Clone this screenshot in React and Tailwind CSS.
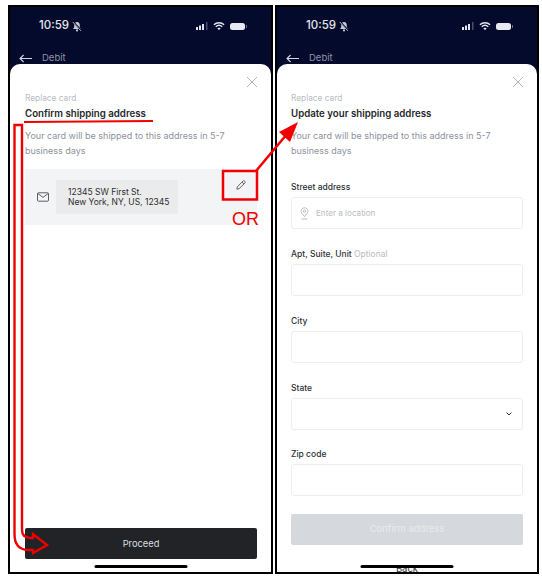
import React from "react";

const font = { fontFamily: "Inter, 'Liberation Sans', sans-serif" };

function StatusBar() {
  return (
    <div className="flex items-center justify-between h-[26px] pl-[29px] pr-[24px] shrink-0">
      <div className="flex items-center gap-[3px] text-[11.5px] font-medium text-[#e4e6ee]">
        <span>10:59</span>
        <svg width="10" height="11" viewBox="0 0 10 11" fill="#c9cbd6">
          <path d="M5 1 C3.2 1 2.2 2.4 2.2 4.2 V6.2 L1 8 H9 L7.8 6.2 V4.2 C7.8 2.4 6.8 1 5 1Z" />
          <circle cx="5" cy="9.4" r="1.1" />
          <path d="M1.4 1 L9.4 9.6" stroke="#040a2c" strokeWidth="1.6" />
          <path d="M0.8 1 L8.8 9.8" stroke="#c9cbd6" strokeWidth="0.9" />
        </svg>
      </div>
      <div className="flex items-center gap-[5px]">
        <svg width="12" height="8" viewBox="0 0 12 8">
          <rect x="0" y="5" width="2" height="3" fill="#e4e6ee" />
          <rect x="3" y="3.5" width="2" height="4.5" fill="#e4e6ee" />
          <rect x="6" y="2" width="2" height="6" fill="#e4e6ee" />
          <rect x="10" y="0" width="1.5" height="8" fill="#4a4e66" />
        </svg>
        <svg width="12" height="10" viewBox="0 0 13 10" fill="none" stroke="#e4e6ee" strokeWidth="1.6">
          <path d="M1 3.6 C4 .8 9 .8 12 3.6" />
          <path d="M3 5.8 C5 4 8 4 10 5.8" />
          <path d="M6.5 9.2 L5 7.6 C6 6.9 7 6.9 8 7.6Z" fill="#e4e6ee" strokeWidth="0.4" />
        </svg>
        <div className="flex items-center gap-[1px]">
          <div className="w-[15px] h-[7px] rounded-[2.5px] bg-[#e8e9f0]" />
          <div className="w-[1px] h-[3px] bg-[#6a6e84]" />
        </div>
      </div>
    </div>
  );
}

function Phone({ width, children }) {
  return (
    <div className={`relative flex flex-col ${width} h-[569px] border-2 border-black bg-[#040a2c] overflow-hidden`}>
      <div className="h-[6px] shrink-0" />
      <StatusBar />
      <div className="flex items-center gap-[10px] h-[25px] pl-[9px] pt-[13px] shrink-0">
        <svg width="13" height="9" viewBox="0 0 13 9" fill="none" stroke="#d5d7e0" strokeWidth="1.1">
          <path d="M13 4.5 H1 M4.6 1 L1 4.5 L4.6 8" />
        </svg>
        <span className="text-[9.5px] text-[#8f92a6]">Debit</span>
      </div>
      <div className="flex-1 flex flex-col bg-white rounded-t-[10px] min-h-0 relative">
        {children}
      </div>
    </div>
  );
}

function Head({ title }) {
  return (
    <>
      <div className="flex justify-end pt-[13px] shrink-0">
        <svg width="10" height="10" viewBox="0 0 10 10" fill="none" stroke="#a9adb4" strokeWidth="0.9">
          <path d="M0 0 L10 10 M10 0 L0 10" />
        </svg>
      </div>
      <div className="text-[8.3px] leading-[12px] text-[#b8bcc3] mt-[5px] shrink-0">Replace card</div>
      <div className="text-[9.7px] leading-[12px] font-semibold text-[#25272b] mt-[4px] shrink-0">{title}</div>
      <div className="text-[9px] leading-[15px] text-[#8d929b] mt-[8px] w-[215px] shrink-0">
        Your card will be shipped to this address in 5-7 business days
      </div>
    </>
  );
}

function Field({ label, optional, mt, children }) {
  return (
    <div className={`shrink-0 ${mt}`}>
      <div className="text-[8.5px] leading-[12px] font-medium text-[#2f3135]">
        {label}
        {optional && <span className="font-normal text-[#b8bcc3]"> {optional}</span>}
      </div>
      <div className="flex items-center h-[32px] mt-[4px] border border-[#eceef0] rounded-[3px] px-[8px]">
        {children}
      </div>
    </div>
  );
}

function Home() {
  return <div className="absolute left-1/2 -translate-x-1/2 bottom-[4px] w-[93px] h-[3px] rounded-full bg-black" />;
}

function Annotations() {
  return (
    <svg className="absolute left-0 top-0 pointer-events-none" width="542" height="584" viewBox="0 0 542 584" fill="none">
      <path d="M24 122 L153 121" stroke="#f00000" strokeWidth="2" />
      <path
        d="M22 125 V530 Q22 538 31 538 H33 V534 L47 545 L33 553 V550 H29 Q14.5 550 14.5 534 V125 Z"
        stroke="#f00000"
        strokeWidth="2.4"
      />
      <rect x="223" y="171" width="34" height="28.5" stroke="#f00000" strokeWidth="2.5" />
      <path d="M256 171 L287 134" stroke="#f00000" strokeWidth="2.5" />
      <path d="M298 122 L279 132 L290 142 Z" fill="#f00000" />
    </svg>
  );
}

export default function App() {
  return (
    <div className="relative w-[542px] h-[584px] bg-white pl-[8px] pt-[5px] flex gap-[2px]" style={font}>
      <Phone width="w-[265px]">
        <div className="flex-1 flex flex-col pl-[15px] pr-[14px] min-h-0">
          <Head title="Confirm shipping address" />
          <div className="flex items-start justify-between h-[56px] mt-[11px] bg-[#f3f4f6] pl-[12px] pr-[11px] shrink-0">
            <div className="flex items-center gap-[7px] h-full">
              <svg width="12" height="10" viewBox="0 0 12 10" fill="none" stroke="#4a4d52" strokeWidth="0.9">
                <rect x="0.5" y="0.8" width="11" height="8.4" rx="1" />
                <path d="M0.8 1.5 L6 5.4 L11.2 1.5" />
              </svg>
              <div className="w-[122px] h-[34px] bg-[#ebebec] flex flex-col justify-center pl-[12px] text-[8.5px] leading-[10.5px] text-[#2c2e32]">
                <div>12345 SW First St.</div>
                <div>New York, NY, US, 12345</div>
              </div>
            </div>
            <svg className="mt-[11px]" width="10" height="10" viewBox="0 0 10 10" fill="none" stroke="#55585d" strokeWidth="0.9">
              <path d="M0.8 9.2 L1.4 6.8 L6.8 1.2 C7.4 .6 8.2 .6 8.8 1.2 C9.4 1.8 9.4 2.6 8.8 3.2 L3.2 8.6 Z" />
              <path d="M6 2 L8 4" />
            </svg>
          </div>
          <div className="text-[18px] leading-[20px] text-[#f00000] text-right -mr-[2px] -mt-[16px] relative font-['Liberation_Sans']">OR</div>
          <div className="flex-1" />
          <div className="h-[31px] mb-[13px] flex items-center justify-center bg-[#212327] rounded-[2px] text-[9.3px] text-[#dedfe1] shrink-0">
            Proceed
          </div>
        </div>
        <Home />
      </Phone>
      <Phone width="w-[264px]">
        <div className="flex-1 flex flex-col px-[14px] min-h-0 overflow-hidden">
          <Head title="Update your shipping address" />
          <Field label="Street address" mt="mt-[23px]">
            <svg width="9" height="13" viewBox="0 0 9 13" fill="none" stroke="#a9adb4" strokeWidth="0.8">
              <path d="M4.5 9.6 C2.6 7.4 1 5.8 1 4.2 C1 2.2 2.6 .8 4.5 .8 C6.4 .8 8 2.2 8 4.2 C8 5.8 6.4 7.4 4.5 9.6Z" />
              <circle cx="4.5" cy="4.2" r="1.2" />
              <path d="M1.6 12 H7.4" />
            </svg>
            <span className="ml-[7px] text-[8.1px] text-[#b8bcc3]">Enter a location</span>
          </Field>
          <Field label="Apt, Suite, Unit" optional="Optional" mt="mt-[19px]" />
          <Field label="City" mt="mt-[19px]" />
          <Field label="State" mt="mt-[19px]">
            <svg className="ml-auto mr-[2px]" width="6" height="4" viewBox="0 0 6 4" fill="none" stroke="#33363a" strokeWidth="1">
              <path d="M0.6 0.6 L3 3 L5.4 0.6" />
            </svg>
          </Field>
          <Field label="Zip code" mt="mt-[18px]" />
          <div className="h-[31px] mt-[18px] flex items-center justify-center bg-[#d5d8dc] rounded-[2px] text-[9.5px] text-[#e9ebed] shrink-0">
            Confirm address
          </div>
          <div className="text-center text-[9.5px] leading-[12px] text-[#33363a] mt-[18px] shrink-0">Back</div>
        </div>
        <Home />
      </Phone>
      <Annotations />
    </div>
  );
}
